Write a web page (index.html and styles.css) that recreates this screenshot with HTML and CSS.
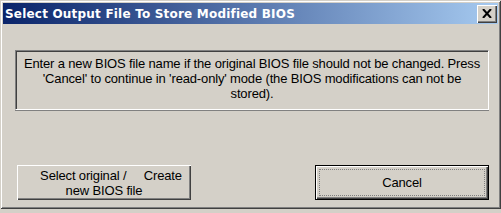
FILE: index.html
```html
<!DOCTYPE html>
<html lang="en">
<head>
    <meta charset="UTF-8">
    <title>Select Output File To Store Modified BIOS</title>
    <link rel="stylesheet" href="styles.css">
</head>
<body>
    <div class="window">
        <div class="titlebar">
            <span class="title">Select Output File To Store Modified BIOS</span>
            <button class="close-button">
                <svg width="10" height="9" viewBox="0 0 10 9">
                    <path d="M1 0 L9 9 M9 0 L1 9" stroke="#000" stroke-width="2"/>
                </svg>
            </button>
        </div>
        <div class="content">
            <div class="message">Enter a new BIOS file name if the original BIOS file should not be changed. Press 'Cancel' to continue in 'read-only' mode (the BIOS modifications can not be stored).</div>
            <div class="buttons">
                <button class="dlg-button"><span class="first-line">Select original /&nbsp;&nbsp;&nbsp;&nbsp; Create</span><br>new BIOS file</button>
                <button class="dlg-button default-button"><span class="focus">Cancel</span></button>
            </div>
        </div>
    </div>
</body>
</html>
```
FILE: styles.css
```css
body {
    margin: 0;
    background: #d4d0c8;
    font-family: "Liberation Sans", Arial, sans-serif;
}
.window {
    width: 501px;
    height: 209px;
    box-sizing: border-box;
    padding: 3px;
    background: #d4d0c8;
    box-shadow: inset 1px 1px 0 #d4d0c8, inset -1px -1px 0 #404040, inset 2px 2px 0 #ffffff, inset -2px -2px 0 #808080;
}
.titlebar {
    height: 21px;
    display: flex;
    align-items: center;
    justify-content: space-between;
    padding: 0 1px 0 2px;
    background: linear-gradient(to right, #0a246a, #a6caf0);
}
.title {
    color: #fff;
    font-family: "DejaVu Sans", Tahoma, sans-serif;
    font-weight: bold;
    font-size: 12px;
    letter-spacing: 0.2px;
}
.close-button {
    width: 20px;
    height: 18px;
    padding: 0;
    border: none;
    background: #d4d0c8;
    display: flex;
    align-items: center;
    justify-content: center;
    box-shadow: inset 1px 1px 0 #ffffff, inset -1px -1px 0 #404040, inset -2px -2px 0 #808080;
}
.content {
    padding: 0 9px 0 12px;
}
.message {
    margin-top: 26px;
    height: 60px;
    box-sizing: border-box;
    padding: 5px 5px 0 5px;
    text-align: center;
    font-size: 13px;
    line-height: 15px;
    letter-spacing: -0.15px;
    color: #000;
    border: 1px solid;
    border-color: #808080 #ffffff #ffffff #808080;
    box-shadow: inset 1px 1px 0 #404040, inset -1px -1px 0 #d4d0c8, 0 1px 0 #808080;
}
.buttons {
    margin-top: 55px;
    display: flex;
    justify-content: space-between;
    padding-left: 2px;
}
.dlg-button {
    width: 174px;
    height: 35px;
    box-sizing: border-box;
    padding: 0 4px;
    border: none;
    background: #d4d0c8;
    font-family: "Liberation Sans", Arial, sans-serif;
    font-size: 13px;
    line-height: 15px;
    letter-spacing: -0.15px;
    color: #000;
    box-shadow: inset 1px 1px 0 #ffffff, inset -1px -1px 0 #404040, inset -2px -2px 0 #808080;
}
.first-line {
    padding-left: 14px;
}
.default-button {
    border: 1px solid #000;
    padding: 3px;
    box-shadow: inset 1px 1px 0 #ffffff, inset -1px -1px 0 #404040, inset -2px -2px 0 #808080;
}
.focus {
    display: flex;
    align-items: center;
    justify-content: center;
    height: 100%;
    outline: 1px dotted #808080;
    outline-offset: -1px;
}
```
